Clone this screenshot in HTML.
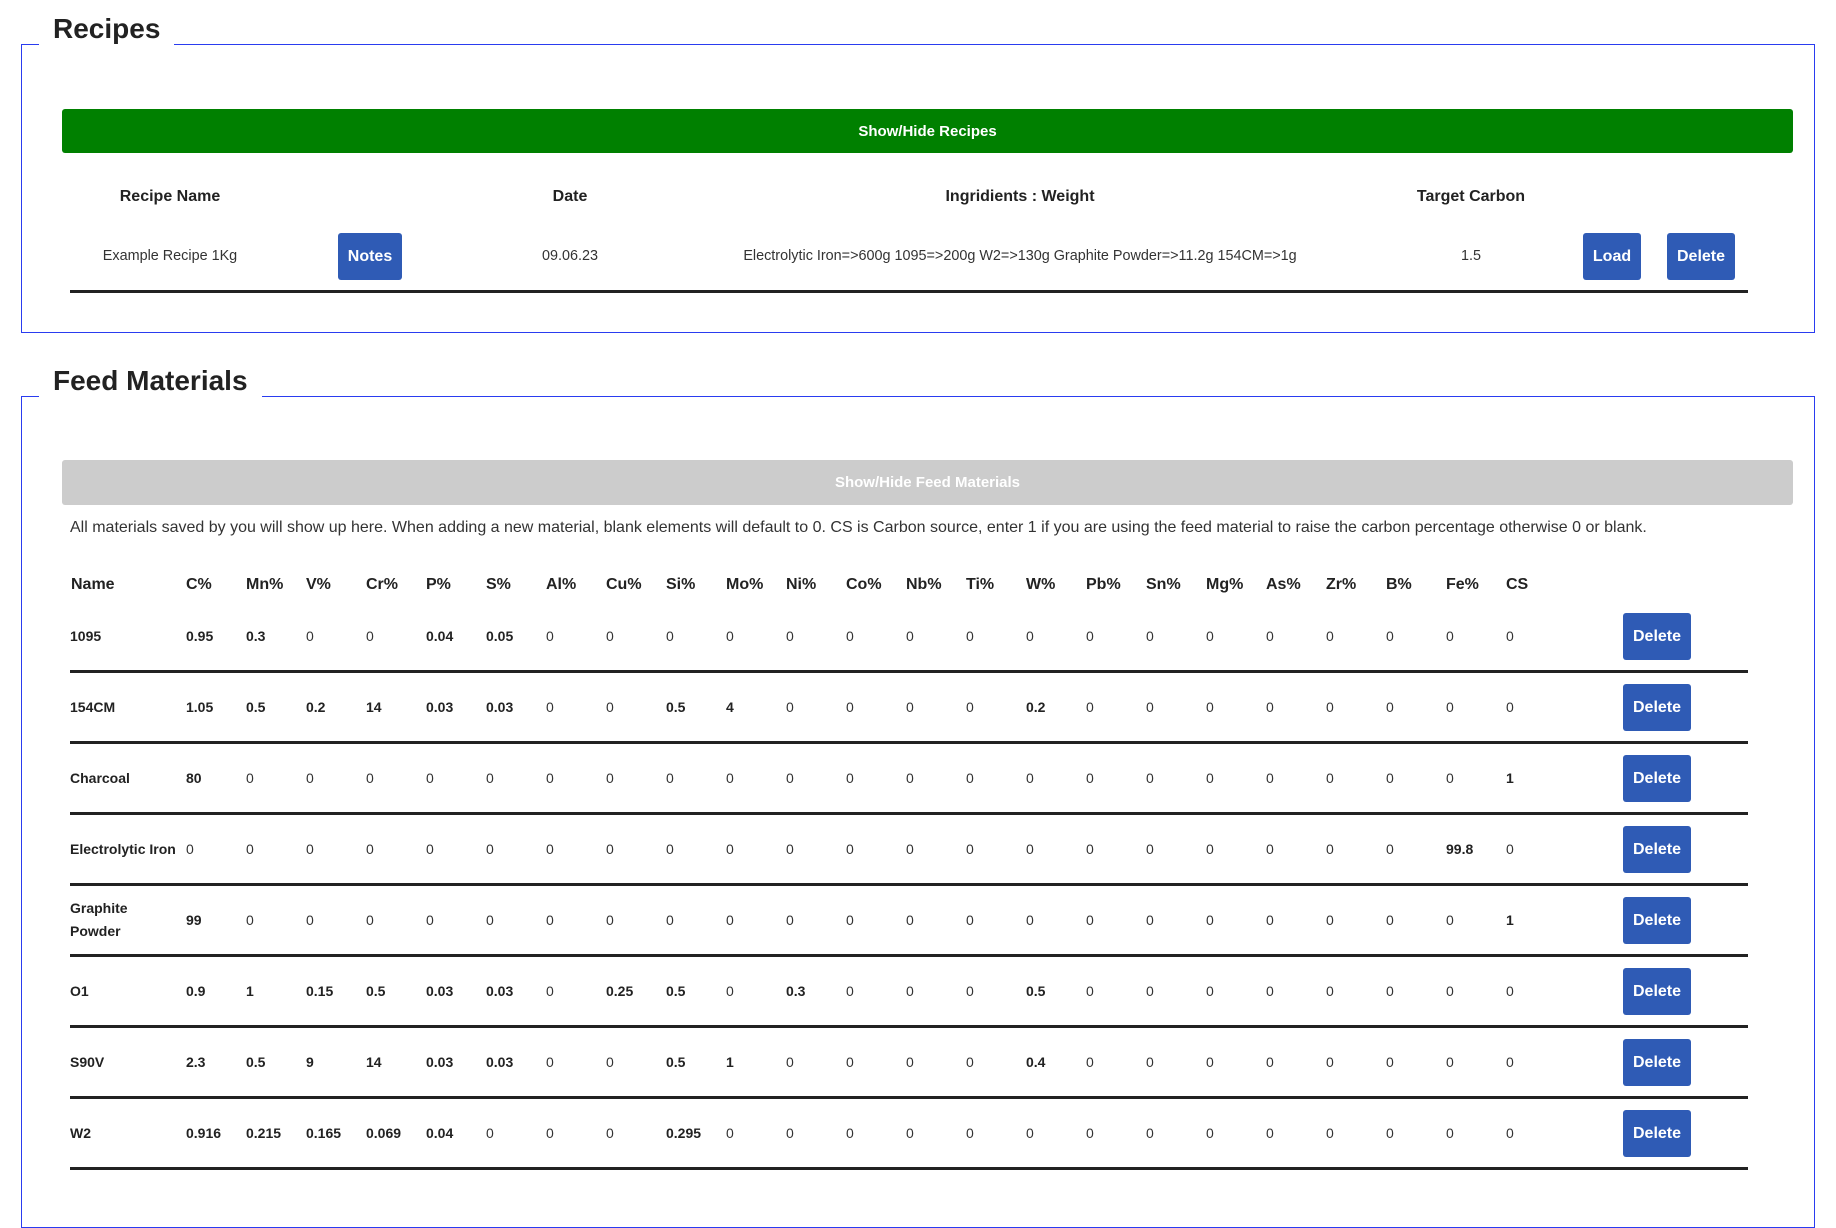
<!DOCTYPE html>
<html><head><meta charset="utf-8"><style>
body{margin:0;width:1836px;height:1204px;overflow:hidden;background:#fff;font-family:"Liberation Sans",Arial,sans-serif;color:#222;position:relative}
.fs{position:absolute;border:1px solid #2a3cf0}
.lg{position:absolute;background:#fff;font-weight:bold;font-size:28px;padding:0 14px 8px;line-height:34px;color:#222}
.btn{position:absolute;border-radius:3px;color:#fff;font-weight:bold;font-size:15px;display:flex;align-items:center;justify-content:center}
.blue{background:#2f5bb5;font-size:16px}
.c{position:absolute;transform:translate(-50%,-50%);white-space:nowrap}
.row{position:absolute;left:70px;width:1678px;height:68px;border-bottom:3px solid #222;display:flex;align-items:center;font-size:14px;color:#333}
.row span{width:60px;flex:none}
.row span.n{width:116px;font-weight:bold;color:#222;line-height:23px}
.row b{width:60px;flex:none;color:#222}
.hd{position:absolute;left:71px;top:576px;display:flex;font-weight:bold;font-size:16px;color:#222}
.hd span{width:60px;flex:none}
.del{position:absolute;left:1553px;top:11px;width:68px;height:47px}
</style></head><body>
<div class="fs" style="left:21px;top:44px;width:1792px;height:287px"></div>
<div class="lg" style="left:39px;top:12px;">Recipes</div>
<div class="btn" style="left:62px;top:109px;width:1731px;height:44px;background:#008000">Show/Hide Recipes</div>
<div style="font-weight:bold;font-size:16px">
<div class="c" style="left:170px;top:197px">Recipe Name</div>
<div class="c" style="left:570px;top:197px">Date</div>
<div class="c" style="left:1020px;top:197px">Ingridients : Weight</div>
<div class="c" style="left:1471px;top:197px">Target Carbon</div>
</div>
<div style="font-size:14.4px;color:#333">
<div class="c" style="left:170px;top:256px">Example Recipe 1Kg</div>
<div class="c" style="left:570px;top:256px">09.06.23</div>
<div class="c" style="left:1020px;top:256px">Electrolytic Iron=&gt;600g 1095=&gt;200g W2=&gt;130g Graphite Powder=&gt;11.2g 154CM=&gt;1g</div>
<div class="c" style="left:1471px;top:256px">1.5</div>
</div>
<div class="btn blue" style="left:338px;top:233px;width:64px;height:47px">Notes</div>
<div class="btn blue" style="left:1583px;top:233px;width:58px;height:47px">Load</div>
<div class="btn blue" style="left:1667px;top:233px;width:68px;height:47px">Delete</div>
<div style="position:absolute;left:70px;top:290px;width:1678px;height:3px;background:#222"></div>

<div class="fs" style="left:21px;top:396px;width:1792px;height:830px"></div>
<div class="lg" style="left:39px;top:364px;">Feed Materials</div>
<div class="btn" style="left:62px;top:460px;width:1731px;height:45px;background:#ccc">Show/Hide Feed Materials</div>
<div style="position:absolute;left:70px;top:519px;font-size:16px;color:#333;white-space:nowrap">All materials saved by you will show up here. When adding a new material, blank elements will default to 0. CS is Carbon source, enter 1 if you are using the feed material to raise the carbon percentage otherwise 0 or blank.</div>
<div class="hd"><span style="width:115px">Name</span><span>C%</span><span>Mn%</span><span>V%</span><span>Cr%</span><span>P%</span><span>S%</span><span>Al%</span><span>Cu%</span><span>Si%</span><span>Mo%</span><span>Ni%</span><span>Co%</span><span>Nb%</span><span>Ti%</span><span>W%</span><span>Pb%</span><span>Sn%</span><span>Mg%</span><span>As%</span><span>Zr%</span><span>B%</span><span>Fe%</span><span>CS</span></div>

<div class="row" style="top:602px"><span class="n">1095</span><b>0.95</b><b>0.3</b><span>0</span><span>0</span><b>0.04</b><b>0.05</b><span>0</span><span>0</span><span>0</span><span>0</span><span>0</span><span>0</span><span>0</span><span>0</span><span>0</span><span>0</span><span>0</span><span>0</span><span>0</span><span>0</span><span>0</span><span>0</span><span>0</span><div class="btn blue del">Delete</div></div>
<div class="row" style="top:673px"><span class="n">154CM</span><b>1.05</b><b>0.5</b><b>0.2</b><b>14</b><b>0.03</b><b>0.03</b><span>0</span><span>0</span><b>0.5</b><b>4</b><span>0</span><span>0</span><span>0</span><span>0</span><b>0.2</b><span>0</span><span>0</span><span>0</span><span>0</span><span>0</span><span>0</span><span>0</span><span>0</span><div class="btn blue del">Delete</div></div>
<div class="row" style="top:744px"><span class="n">Charcoal</span><b>80</b><span>0</span><span>0</span><span>0</span><span>0</span><span>0</span><span>0</span><span>0</span><span>0</span><span>0</span><span>0</span><span>0</span><span>0</span><span>0</span><span>0</span><span>0</span><span>0</span><span>0</span><span>0</span><span>0</span><span>0</span><span>0</span><b>1</b><div class="btn blue del">Delete</div></div>
<div class="row" style="top:815px"><span class="n">Electrolytic Iron</span><span>0</span><span>0</span><span>0</span><span>0</span><span>0</span><span>0</span><span>0</span><span>0</span><span>0</span><span>0</span><span>0</span><span>0</span><span>0</span><span>0</span><span>0</span><span>0</span><span>0</span><span>0</span><span>0</span><span>0</span><span>0</span><b>99.8</b><span>0</span><div class="btn blue del">Delete</div></div>
<div class="row" style="top:886px"><span class="n">Graphite<br>Powder</span><b>99</b><span>0</span><span>0</span><span>0</span><span>0</span><span>0</span><span>0</span><span>0</span><span>0</span><span>0</span><span>0</span><span>0</span><span>0</span><span>0</span><span>0</span><span>0</span><span>0</span><span>0</span><span>0</span><span>0</span><span>0</span><span>0</span><b>1</b><div class="btn blue del">Delete</div></div>
<div class="row" style="top:957px"><span class="n">O1</span><b>0.9</b><b>1</b><b>0.15</b><b>0.5</b><b>0.03</b><b>0.03</b><span>0</span><b>0.25</b><b>0.5</b><span>0</span><b>0.3</b><span>0</span><span>0</span><span>0</span><b>0.5</b><span>0</span><span>0</span><span>0</span><span>0</span><span>0</span><span>0</span><span>0</span><span>0</span><div class="btn blue del">Delete</div></div>
<div class="row" style="top:1028px"><span class="n">S90V</span><b>2.3</b><b>0.5</b><b>9</b><b>14</b><b>0.03</b><b>0.03</b><span>0</span><span>0</span><b>0.5</b><b>1</b><span>0</span><span>0</span><span>0</span><span>0</span><b>0.4</b><span>0</span><span>0</span><span>0</span><span>0</span><span>0</span><span>0</span><span>0</span><span>0</span><div class="btn blue del">Delete</div></div>
<div class="row" style="top:1099px"><span class="n">W2</span><b>0.916</b><b>0.215</b><b>0.165</b><b>0.069</b><b>0.04</b><span>0</span><span>0</span><span>0</span><b>0.295</b><span>0</span><span>0</span><span>0</span><span>0</span><span>0</span><span>0</span><span>0</span><span>0</span><span>0</span><span>0</span><span>0</span><span>0</span><span>0</span><span>0</span><div class="btn blue del">Delete</div></div>
</body></html>
